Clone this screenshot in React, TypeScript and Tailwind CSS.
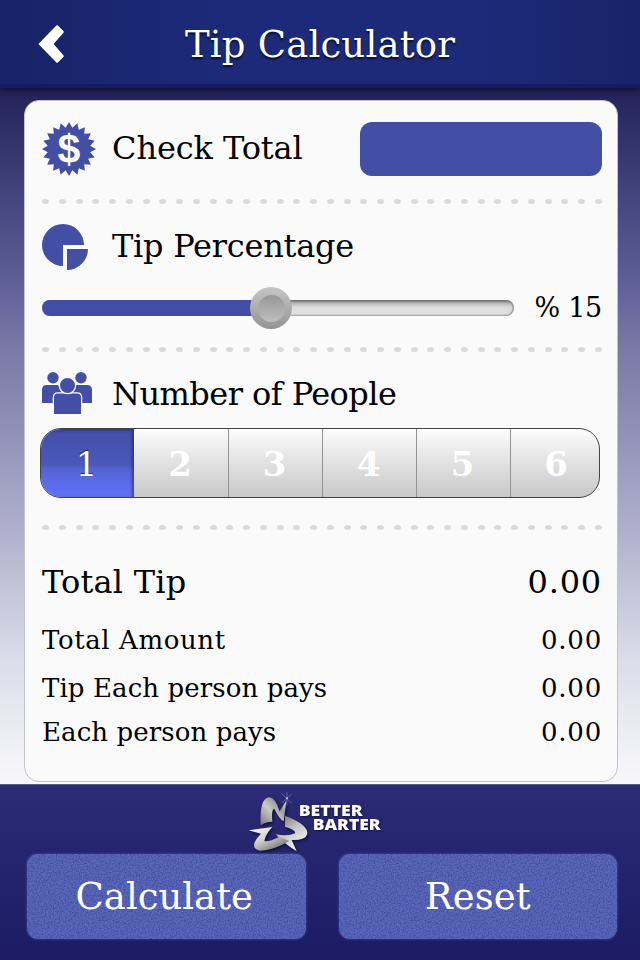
import { useState } from "react";

const people = [1, 2, 3, 4, 5, 6];

const totals = [
  { label: "Total Tip", row: "h-[60px] text-[32px]", spacing: "tracking-[0.2px]", value: "tracking-[0.8px]" },
  { label: "Total Amount", row: "h-[56px] text-[26px]", spacing: "tracking-[0.6px]", value: "tracking-[0.8px]" },
  { label: "Tip Each person pays", row: "h-[40px] text-[26px]", spacing: "tracking-[0.1px]", value: "tracking-[0.8px]" },
  { label: "Each person pays", row: "h-[48px] text-[26px]", spacing: "tracking-[0.1px]", value: "tracking-[0.8px]" },
];

// 20-pointed seal around (27, 27)
const sealPoints = Array.from({ length: 40 }, (_, i) => {
  const r = i % 2 === 0 ? 27 : 21.5;
  const a = (i * Math.PI) / 20 - Math.PI / 2;
  return `${(27 + r * Math.cos(a)).toFixed(2)},${(27 + r * Math.sin(a)).toFixed(2)}`;
}).join(" ");

function Divider() {
  return (
    <div className="flex h-2 items-center justify-between">
      {Array.from({ length: 34 }, (_, i) => (
        <span key={i} className="h-[5px] w-[7px] rounded-[50%] bg-[#dadada]" />
      ))}
    </div>
  );
}

function DollarIcon() {
  return (
    <svg width="54" height="54" viewBox="0 0 54 54">
      <polygon points={sealPoints} fill="#434ea5" />
      <text
        x="27"
        y="40.5"
        textAnchor="middle"
        fill="#fff"
        className="font-['Liberation_Sans',sans-serif] text-[41px] font-bold"
      >
        $
      </text>
    </svg>
  );
}

function PieIcon() {
  return (
    <svg width="46" height="46" viewBox="0 0 46 46" fill="#434ea5">
      <path d="M21 21H42A21 21 0 1 0 21 42Z" />
      <path d="M25 25H46A21 21 0 0 1 25 46Z" />
    </svg>
  );
}

function PeopleIcon() {
  return (
    <svg width="50" height="42" viewBox="0 0 50 42" fill="#434ea5">
      <circle cx="11" cy="5.7" r="5.7" />
      <circle cx="39" cy="5.7" r="5.7" />
      <path d="M0 31V18Q0 13 5 13H16L20 21V31Z" />
      <path d="M50 31V18Q50 13 45 13H34L30 21V31Z" />
      <path
        d="M12 43V25.500Q12 21.500 16 21.500H35Q39 21.500 39 25.500V43Z"
        stroke="#fafafa"
        strokeWidth="2.500"
        paintOrder="stroke"
      />
      <circle cx="25.500" cy="13.500" r="7.500" stroke="#fafafa" strokeWidth="2.500" paintOrder="stroke" />
    </svg>
  );
}

function Logo() {
  return (
    <svg width="140" height="64" viewBox="80 60 420 192" className="overflow-visible">
      <defs>
        <linearGradient id="silverTop" x1="0" y1="1" x2="1" y2="0">
          <stop offset="0" stopColor="#77777b" />
          <stop offset="0.45" stopColor="#c9c9ca" />
          <stop offset="0.7" stopColor="#9b9b9d" />
          <stop offset="1" stopColor="#fff" />
        </linearGradient>
        <linearGradient id="silverRight" x1="0" y1="0" x2="0.6" y2="1">
          <stop offset="0" stopColor="#66666a" />
          <stop offset="0.5" stopColor="#c4c4c6" />
          <stop offset="1" stopColor="#f4f4f4" />
        </linearGradient>
        <linearGradient id="silverLeft" x1="0" y1="0" x2="0.8" y2="1">
          <stop offset="0" stopColor="#fff" />
          <stop offset="0.5" stopColor="#cfcfcf" />
          <stop offset="1" stopColor="#6b6b6e" />
        </linearGradient>
      </defs>
      <g className="drop-shadow-[4px_5px_4px_rgba(0,0,0,0.6)]">
        <path
          d="M121 166Q117 84 147 82Q165 83 178 124L198 92L190 154Q176 146 162 116Q152 118 156 155Q138 154 121 166Z"
          fill="url(#silverTop)"
        />
        <path
          d="M194 137Q264 163 261 192Q256 211 214 210L229 244Q190 220 166 193Q204 200 224 190Q228 180 194 170Z"
          fill="url(#silverRight)"
        />
        <path
          d="M85 181L156 171Q136 193 132 212Q140 218 178 200L207 213Q160 241 118 242Q96 238 103 217Q110 202 122 191Z"
          fill="url(#silverLeft)"
        />
      </g>
      <path d="M184 70L214 100M214 72L186 98M200 66V104" stroke="#7d7dc8" strokeWidth="2" />
      <circle cx="200" cy="85" r="3" fill="#c8c8f0" />
      <g
        fill="#fff"
        className="font-['Open_Sans',sans-serif] text-[46px] font-extrabold drop-shadow-[3px_3px_3px_rgba(0,0,0,0.5)]"
      >
        <text x="235" y="137" textLength="192" lengthAdjust="spacingAndGlyphs">
          BETTER
        </text>
        <text x="277" y="180" textLength="204" lengthAdjust="spacingAndGlyphs">
          BARTER
        </text>
      </g>
    </svg>
  );
}

// fine grain laid over the button faces
function Grain() {
  return (
    <svg className="absolute inset-0 h-full w-full opacity-60" aria-hidden="true">
      <filter id="grain" x="0" y="0" width="100%" height="100%" colorInterpolationFilters="sRGB">
        <feTurbulence type="fractalNoise" baseFrequency="0.65" numOctaves="2" />
        <feColorMatrix values="0 0 0 0 0.18  0 0 0 0 0.22  0 0 0 0 0.56  2.2 0 0 0 -0.8" />
      </filter>
      <rect width="100%" height="100%" filter="url(#grain)" />
    </svg>
  );
}

function FooterButton({ label, spacing, onClick }: { label: string; spacing: string; onClick?: () => void }) {
  return (
    <button
      onClick={onClick}
      className="relative h-[85px] flex-1 overflow-hidden rounded-[11px] bg-[#5c69ba] text-[37px] text-white shadow-[0_0_3px_#4350a6]"
    >
      <Grain />
      <span className={`relative ${spacing}`}>{label}</span>
    </button>
  );
}

export default function App() {
  const [count, setCount] = useState(1);
  const [check, setCheck] = useState("");
  const [result, setResult] = useState([0, 0, 0, 0]);
  const tip = 15;

  const calculate = () => {
    const amount = Number(check) || 0;
    const totalTip = (amount * tip) / 100;
    const total = amount + totalTip;
    setResult([totalTip, total, totalTip / count, total / count]);
  };

  const reset = () => {
    setCheck("");
    setCount(1);
    setResult([0, 0, 0, 0]);
  };

  return (
    <div className="flex h-[960px] w-[640px] flex-col overflow-hidden bg-[linear-gradient(180deg,#25255c_0px,#25255c_95px,#45457f_200px,#62629a_290px,#7a7aa6_350px,#9090b8_430px,#b3b3cf_540px,#dcdcea_660px,#f8f8fb_784px)] font-['DejaVu_Serif',serif] text-black">
      <header className="relative grid h-[88px] shrink-0 grid-cols-[100px_1fr_100px] items-center border-b-4 border-[#141d63] bg-[linear-gradient(90deg,#172368_0%,#1c2a79_35%,#1c2a79_75%,#182468_100%)] shadow-[0_2px_7px_rgba(5,5,35,0.8)]">
        <svg width="26" height="38" viewBox="0 0 26 38" className="ml-[38px] mt-1">
          <path
            d="M19 1.500L24.500 7L14 19L24.500 31L19 36.500L2 19Z"
            fill="#fff"
            stroke="#fff"
            strokeWidth="2.500"
            strokeLinejoin="round"
          />
        </svg>
        <h1 className="mt-1 whitespace-nowrap text-center text-[37px] leading-none tracking-[0.2px] text-white [text-shadow:0_2px_2px_rgba(0,0,0,0.7)]">
          Tip Calculator
        </h1>
      </header>

      <main className="mb-0.5 ml-6 mr-[22px] mt-3 h-[682px] shrink-0 rounded-[15px] border border-[#c2c2c8] bg-[#fafafa] pl-[17px] pr-[15px]">
        <section className="flex h-24 items-center">
          <DollarIcon />
          <h2 className="mb-0.5 ml-4 flex-1 whitespace-nowrap text-[32px] leading-none tracking-[-0.1px]">
            Check Total
          </h2>
          <input
            value={check}
            onChange={(e) => setCheck(e.target.value)}
            className="h-[54px] w-[242px] rounded-xl bg-[#434ea5] px-3 text-right text-white outline-none"
          />
        </section>

        <Divider />

        <section>
          <div className="flex h-[84px] items-center">
            <PieIcon />
            <h2 className="mb-[3px] ml-6 text-[32px] leading-none tracking-[-0.25px]">Tip Percentage</h2>
          </div>
          <div className="mb-[18px] flex h-[38px] items-center justify-between">
            <div className="relative h-4 w-[472px] rounded-full bg-[linear-gradient(180deg,#686868_0%,#b5b5b5_20%,#dcdcdc_45%,#e0e0e0_85%,#b8b8b8_100%)] shadow-[inset_-1px_0_2px_#777]">
              <div className="absolute left-0 top-0 h-4 w-[229px] rounded-l-full bg-[#434ea5]" />
              <div className="absolute left-[208px] top-[-13px] flex size-[42px] items-center justify-center rounded-full bg-[linear-gradient(180deg,#c6c6c6,#949494)]">
                <div className="size-[27px] rounded-full bg-[linear-gradient(180deg,#989898,#bdbdbd)]" />
              </div>
            </div>
            <span className="mb-0.5 whitespace-nowrap text-[27px] leading-none tracking-[-0.3px]">% {tip}</span>
          </div>
        </section>

        <Divider />

        <section>
          <div className="flex h-[75px] items-center pt-[5px]">
            <PeopleIcon />
            <h2 className="ml-5 mt-0.5 whitespace-nowrap text-[32px] leading-none tracking-[-0.55px]">
              Number of People
            </h2>
          </div>
          <div className="-ml-0.5 mb-[25px] mr-0.5 grid h-[70px] grid-cols-[93px_94px_94px_94px_94px_1fr] overflow-hidden rounded-[21px] border border-[#444] bg-[linear-gradient(180deg,#fdfdfd_0%,#e4e4e4_45%,#c8c8c8_100%)]">
            {people.map((n) => (
              <button
                key={n}
                onClick={() => setCount(n)}
                className={
                  n === count
                    ? "bg-[linear-gradient(180deg,#434ea5_0%,#4a58bd_52%,#5464d6_60%,#6073fa_100%)] pr-0.5 pt-0.5 text-[34px] text-white shadow-[inset_-2px_1px_3px_rgba(20,20,80,0.5)] [text-shadow:0_-1px_1px_rgba(0,0,0,0.6)]"
                    : "border-l border-[#939393] pr-0.5 pt-0.5 text-[34px] font-bold text-white first:border-l-0 last:pl-1 [&:nth-child(2)]:border-l-0"
                }
              >
                {n}
              </button>
            ))}
          </div>
        </section>

        <Divider />

        <dl className="mt-[21px]">
          {totals.map((t, i) => (
            <div key={t.label} className={`flex items-center justify-between whitespace-nowrap leading-none ${t.row}`}>
              <dt className={t.spacing}>{t.label}</dt>
              <dd className={t.value}>{result[i].toFixed(2)}</dd>
            </div>
          ))}
        </dl>
      </main>

      <footer className="h-[176px] shrink-0 border-t border-[#5a5a80] bg-[linear-gradient(180deg,#2b2b76,#1c1b64)]">
        <div className="ml-[247px] h-[69px] pt-[5px]">
          <Logo />
        </div>
        <div className="flex gap-[33px] pl-[27px] pr-[23px]">
          <FooterButton label="Calculate" spacing="right-0.5" onClick={calculate} />
          <FooterButton label="Reset" spacing="tracking-[0.1px]" onClick={reset} />
        </div>
      </footer>
    </div>
  );
}
